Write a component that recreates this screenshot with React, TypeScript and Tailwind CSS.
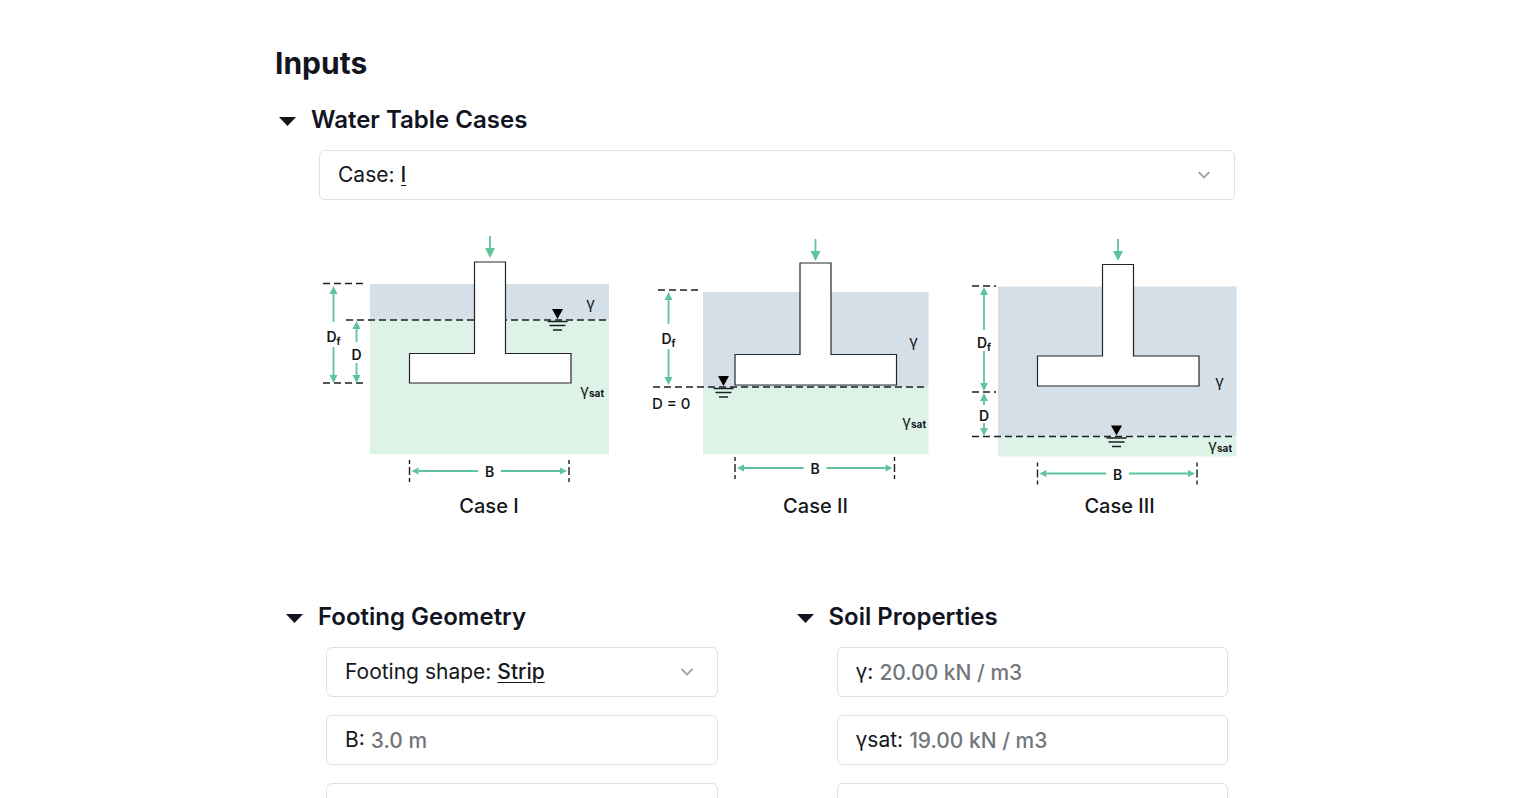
import { useState } from 'react';
import type { ReactNode } from 'react';

interface FootingCase {
  name: string;
  center: number;
  nameX: number;
  loadTop: number;
  columnTop: number;
  slabTop: number;
  slabBottom: number;
  soil: { left: number; right: number; top: number; bottom: number };
  water: number;
  waterLeft: number;
  symbolX: number;
  gamma: [number, number];
  gammaSat: [number, number];
  bLine: number;
}

const footingCases: FootingCase[] = [
  {
    name: 'Case I',
    center: 171,
    nameX: 170,
    loadTop: 6,
    columnTop: 32,
    slabTop: 123.5,
    slabBottom: 153,
    soil: { left: 51, right: 290, top: 54, bottom: 224 },
    water: 90,
    waterLeft: 27,
    symbolX: 238.5,
    gamma: [267, 79],
    gammaSat: [261, 166],
    bLine: 241,
  },
  {
    name: 'Case II',
    center: 496.5,
    nameX: 496.5,
    loadTop: 9,
    columnTop: 33,
    slabTop: 124.5,
    slabBottom: 155,
    soil: { left: 384, right: 609.5, top: 62, bottom: 224 },
    water: 157,
    waterLeft: 334,
    symbolX: 404.5,
    gamma: [590, 117],
    gammaSat: [583, 197],
    bLine: 238,
  },
  {
    name: 'Case III',
    center: 799,
    nameX: 800.5,
    loadTop: 9,
    columnTop: 34.5,
    slabTop: 126,
    slabBottom: 156,
    soil: { left: 679, right: 917.5, top: 56.5, bottom: 226.5 },
    water: 206.5,
    waterLeft: 653,
    symbolX: 797.5,
    gamma: [896, 157],
    gammaSat: [889, 221],
    bLine: 243.5,
  },
];

function Arrow({ x1, y1, x2, y2, size = 8 }: { x1: number; y1: number; x2: number; y2: number; size?: number }) {
  const length = Math.hypot(x2 - x1, y2 - y1);
  const ux = (x2 - x1) / length;
  const uy = (y2 - y1) / length;
  const half = size / 2;
  const bx = x2 - ux * size;
  const by = y2 - uy * size;

  return (
    <g className="fill-[#5fc49a] stroke-[#5fc49a]">
      <line x1={x1} y1={y1} x2={bx} y2={by} strokeWidth="1.8" />
      <polygon
        points={`${x2},${y2} ${bx - uy * half},${by + ux * half} ${bx + uy * half},${by - ux * half}`}
        stroke="none"
      />
    </g>
  );
}

// Vertical dimension with an arrow at each end and a break for the label
function Depth({ x, top, bottom, gap, label, sub }: { x: number; top: number; bottom: number; gap: [number, number]; label: string; sub?: string }) {
  return (
    <g>
      <Arrow x1={x} y1={gap[0]} x2={x} y2={top} size={8} />
      <Arrow x1={x} y1={gap[1]} x2={x} y2={bottom} size={8} />
      <text x={x} y={(gap[0] + gap[1]) / 2 + 7} textAnchor="middle" className="text-[14px] font-semibold">
        {label}
        {sub && <tspan dy="3" className="text-[10px] font-bold">{sub}</tspan>}
      </text>
    </g>
  );
}

function Dash({ x1, x2, y }: { x1: number; x2: number; y: number }) {
  return <line x1={x1} y1={y} x2={x2} y2={y} strokeDasharray="7 4" strokeWidth="1.5" className="stroke-[#1b1f24]" />;
}

function Footing({ data }: { data: FootingCase }) {
  const { center, soil, water, symbolX, bLine } = data;
  const left = center - 80.5;
  const right = center + 81;
  const tickRight = right - 2;

  return (
    <g>
      <rect x={soil.left} y={soil.top} width={soil.right - soil.left} height={water - soil.top} className="fill-[#d5dfe8]" />
      <rect x={soil.left} y={water} width={soil.right - soil.left} height={soil.bottom - water} className="fill-[#def3e7]" />
      <Dash x1={data.waterLeft} x2={soil.right - 1} y={water} />

      <path
        d={`M${center - 15.5} ${data.columnTop}H${center + 15.5}V${data.slabTop}H${right}V${data.slabBottom}H${left}V${data.slabTop}H${center - 15.5}Z`}
        className="fill-white stroke-[#22262b]"
        strokeWidth="1.2"
      />
      <Arrow x1={center} y1={data.loadTop} x2={center} y2={data.loadTop + 22} size={10} />

      {/* water level symbol */}
      <path d={`M${symbolX - 5.5} ${water - 11}h11l-5.5 10z`} className="fill-black" />
      <path
        d={`M${symbolX - 10} ${water + 1.5}h20M${symbolX - 8} ${water + 5.5}h16M${symbolX - 4.5} ${water + 10}h9`}
        className="stroke-[#1b1f24]"
        strokeWidth="1.4"
      />

      <text x={data.gamma[0]} y={data.gamma[1]} className="text-[16px]">γ</text>
      <text x={data.gammaSat[0]} y={data.gammaSat[1]} className="text-[16px]">
        γ<tspan dy="1" className="text-[10px] font-bold">sat</tspan>
      </text>

      {/* width B */}
      <path
        d={`M${left} ${bLine - 11}v22M${tickRight} ${bLine - 11}v22`}
        strokeDasharray="4 3 8 3 4 0"
        strokeWidth="1.4"
        className="stroke-[#1b1f24]"
      />
      <Arrow x1={center - 12} y1={bLine} x2={left + 2} y2={bLine} size={7} />
      <Arrow x1={center + 11} y1={bLine} x2={tickRight - 2} y2={bLine} size={7} />
      <text x={center - 0.5} y={bLine + 6} textAnchor="middle" className="text-[14px] font-semibold">B</text>

      <text x={data.nameX} y="283" textAnchor="middle" className="text-[20px] font-medium">{data.name}</text>
    </g>
  );
}

function WaterTableDiagram() {
  return (
    <svg viewBox="0 0 918 290" className="block w-full fill-[#15181c]" role="img" aria-label="Water table cases">
      {footingCases.map((item) => (
        <Footing key={item.name} data={item} />
      ))}

      <Dash x1={4} x2={46} y={53.5} />
      <Dash x1={4} x2={46} y={153} />
      <Depth x={14.5} top={56} bottom={153} gap={[92, 117]} label="D" sub="f" />
      <Depth x={37.5} top={91} bottom={153} gap={[112, 133]} label="D" />

      <Dash x1={339} x2={382} y={60} />
      <Depth x={349.5} top={62} bottom={155} gap={[94, 119]} label="D" sub="f" />
      <text x="333" y="179" className="text-[15px] font-medium">D = 0</text>

      <Dash x1={653} x2={677} y={56} />
      <Dash x1={653} x2={677} y={162} />
      <Depth x={665} top={57} bottom={161} gap={[100, 121]} label="D" sub="f" />
      <Depth x={665} top={163} bottom={206} gap={[175, 193]} label="D" />
    </svg>
  );
}

function Section({ title, children }: { title: string; children: ReactNode }) {
  const [open, setOpen] = useState(true);

  return (
    <section>
      <h3>
        <button
          type="button"
          onClick={() => setOpen(!open)}
          aria-expanded={open}
          className="flex h-8 items-center gap-[15px] pl-1 text-2xl font-semibold text-[#12141f]"
        >
          <svg viewBox="0 0 17 9" className={`mt-0.5 h-[9px] w-[17px] ${open ? '' : '-rotate-90'}`} fill="currentColor">
            <path d="M0 0h17L8.5 9z" />
          </svg>
          {title}
        </button>
      </h3>
      {open && <div className="mt-[14px] pl-11">{children}</div>}
    </section>
  );
}

const fieldClass = 'flex h-[50px] items-center gap-[6px] rounded-md border border-[#dfe0e2] bg-white pl-[18px] text-[21px] text-[#15181c]';

function SelectField({ label, options }: { label: string; options: string[] }) {
  const [value, setValue] = useState(options[0]);

  return (
    <label className={`relative ${fieldClass}`}>
      <span className="shrink-0">{label}:</span>
      <select
        value={value}
        onChange={(e) => setValue(e.target.value)}
        className="h-full min-w-0 flex-1 appearance-none bg-transparent font-medium underline decoration-1 underline-offset-3 outline-none"
      >
        {options.map((option) => (
          <option key={option}>{option}</option>
        ))}
      </select>
      <svg viewBox="0 0 12 8" className="pointer-events-none absolute right-6 h-2 w-3 fill-none stroke-[#a3a3a3]" strokeWidth="1.8">
        <path d="M0.5 1L6 6.5L11.5 1" />
      </svg>
    </label>
  );
}

function ValueField({ label, initial = '' }: { label?: string; initial?: string }) {
  const [value, setValue] = useState(initial);

  return (
    <label className={fieldClass}>
      {label && <span className="shrink-0">{label}:</span>}
      <input
        type="text"
        value={value}
        onChange={(e) => setValue(e.target.value)}
        className="h-full min-w-0 flex-1 bg-transparent font-medium text-[#73767b] outline-none"
      />
    </label>
  );
}

export default function App() {
  return (
    <div className="min-h-screen bg-white pr-[10px] font-['Inter',sans-serif]">
      <main className="mx-auto max-w-[960px] pt-[43px]">
        <h2 className="text-[30px] leading-10 font-bold text-[#12141f]">Inputs</h2>

        <div className="mt-[21px]">
          <Section title="Water Table Cases">
            <SelectField label="Case" options={['I', 'II', 'III']} />
            <div className="mt-[30px] -mr-0.5">
              <WaterTableDiagram />
            </div>
          </Section>
        </div>

        <div className="mt-[81px] grid grid-cols-2 gap-[75px] px-[7px]">
          <Section title="Footing Geometry">
            <div className="flex flex-col gap-[18px]">
              <SelectField label="Footing shape" options={['Strip', 'Square', 'Circular']} />
              <ValueField label="B" initial="3.0 m" />
              <ValueField />
            </div>
          </Section>
          <Section title="Soil Properties">
            <div className="flex flex-col gap-[18px]">
              <ValueField label="γ" initial="20.00 kN / m3" />
              <ValueField label="γsat" initial="19.00 kN / m3" />
              <ValueField />
            </div>
          </Section>
        </div>
      </main>
    </div>
  );
}
